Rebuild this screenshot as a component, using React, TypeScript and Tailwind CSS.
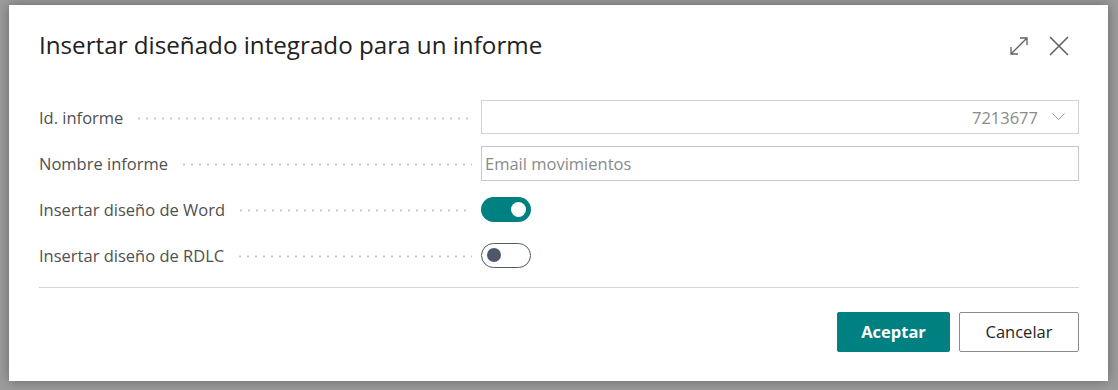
import { useState } from "react";

const font = { fontFamily: '"Open Sans", "Noto Sans", sans-serif' };

function Leader() {
  return (
    <div className="flex-1 ml-3 mr-[9px] h-[3px] bg-[radial-gradient(circle,#c8c8c8_0.9px,transparent_1.3px)] bg-[length:8px_3px] bg-repeat-x" />
  );
}

function Row({ label, children }: { label: string; children: React.ReactNode }) {
  return (
    <div className="flex items-center h-[46px]">
      <div className="w-[442px] flex items-center pt-[3px]">
        <span className="text-[16.5px] text-[#505050] whitespace-nowrap">{label}</span>
        <Leader />
      </div>
      <div className="flex-1 flex items-center">{children}</div>
    </div>
  );
}

function Toggle({ on, onClick }: { on: boolean; onClick: () => void }) {
  return on ? (
    <button
      onClick={onClick}
      className="w-[50px] h-[25px] rounded-full bg-[#008080] flex items-center justify-end pr-[5px]"
    >
      <span className="w-[15px] h-[15px] rounded-full bg-white" />
    </button>
  ) : (
    <button
      onClick={onClick}
      className="w-[50px] h-[25px] rounded-full border border-[#505a6b] bg-white flex items-center pl-[5px]"
    >
      <span className="w-[14px] h-[14px] rounded-full bg-[#4f586b]" />
    </button>
  );
}

export default function App() {
  const [word, setWord] = useState(true);
  const [rdlc, setRdlc] = useState(false);

  return (
    <div className="w-[1118px] h-[390px] bg-[#9c9c9c] pl-[9px] pt-[5px]" style={font}>
      <div className="w-[1099px] h-[376px] bg-white shadow-[0_0_12px_rgba(0,0,0,0.35)] pl-[30px] pr-[29px] flex flex-col">
        <div className="flex items-center justify-between h-[80px] pt-[1px]">
          <h1 className="text-[24.2px] text-[#212121]">Insertar diseñado integrado para un informe</h1>
          <div className="flex items-center gap-[19px] mr-[9px] text-[#616161]">
            <svg width="20" height="20" viewBox="0 0 20 20" fill="none" stroke="currentColor" strokeWidth="1.3">
              <path d="M2 18 L18 2 M11 2 H18 V9 M2 11 V18 H9" />
            </svg>
            <svg width="22" height="22" viewBox="0 0 22 22" fill="none" stroke="currentColor" strokeWidth="1.6">
              <path d="M2 2 L20 20 M20 2 L2 20" />
            </svg>
          </div>
        </div>

        <div className="flex flex-col pt-[9px]">
          <Row label="Id. informe">
            <div className="w-full h-[34px] border border-[#d2d2d2] flex items-center justify-end pr-[13px] gap-[14px]">
              <span className="text-[16.5px] text-[#8a8a8a] pt-[2px]">7213677</span>
              <svg width="13" height="8" viewBox="0 0 13 8" fill="none" stroke="#8a9bb5" strokeWidth="1">
                <path d="M0.5 0.5 L6.5 6.5 L12.5 0.5" />
              </svg>
            </div>
          </Row>
          <Row label="Nombre informe">
            <div className="w-full h-[35px] border border-[#c8c8c8] flex items-center pl-[3px]">
              <span className="text-[16.5px] text-[#8a8a8a] pt-[2px]">Email movimientos</span>
            </div>
          </Row>
          <Row label="Insertar diseño de Word">
            <Toggle on={word} onClick={() => setWord(!word)} />
          </Row>
          <Row label="Insertar diseño de RDLC">
            <Toggle on={rdlc} onClick={() => setRdlc(!rdlc)} />
          </Row>
        </div>

        <div className="mt-[9px] border-t border-[#d4d4d4]" />

        <div className="flex justify-end gap-[9px] pt-[24px]">
          <button className="w-[113px] h-[40px] rounded-[2px] bg-[#008080] text-white text-[16.5px] font-bold">
            Aceptar
          </button>
          <button className="w-[120px] h-[40px] rounded-[2px] border border-[#8a8a8a] bg-white text-[#242424] text-[16.5px]">
            Cancelar
          </button>
        </div>
      </div>
    </div>
  );
}
